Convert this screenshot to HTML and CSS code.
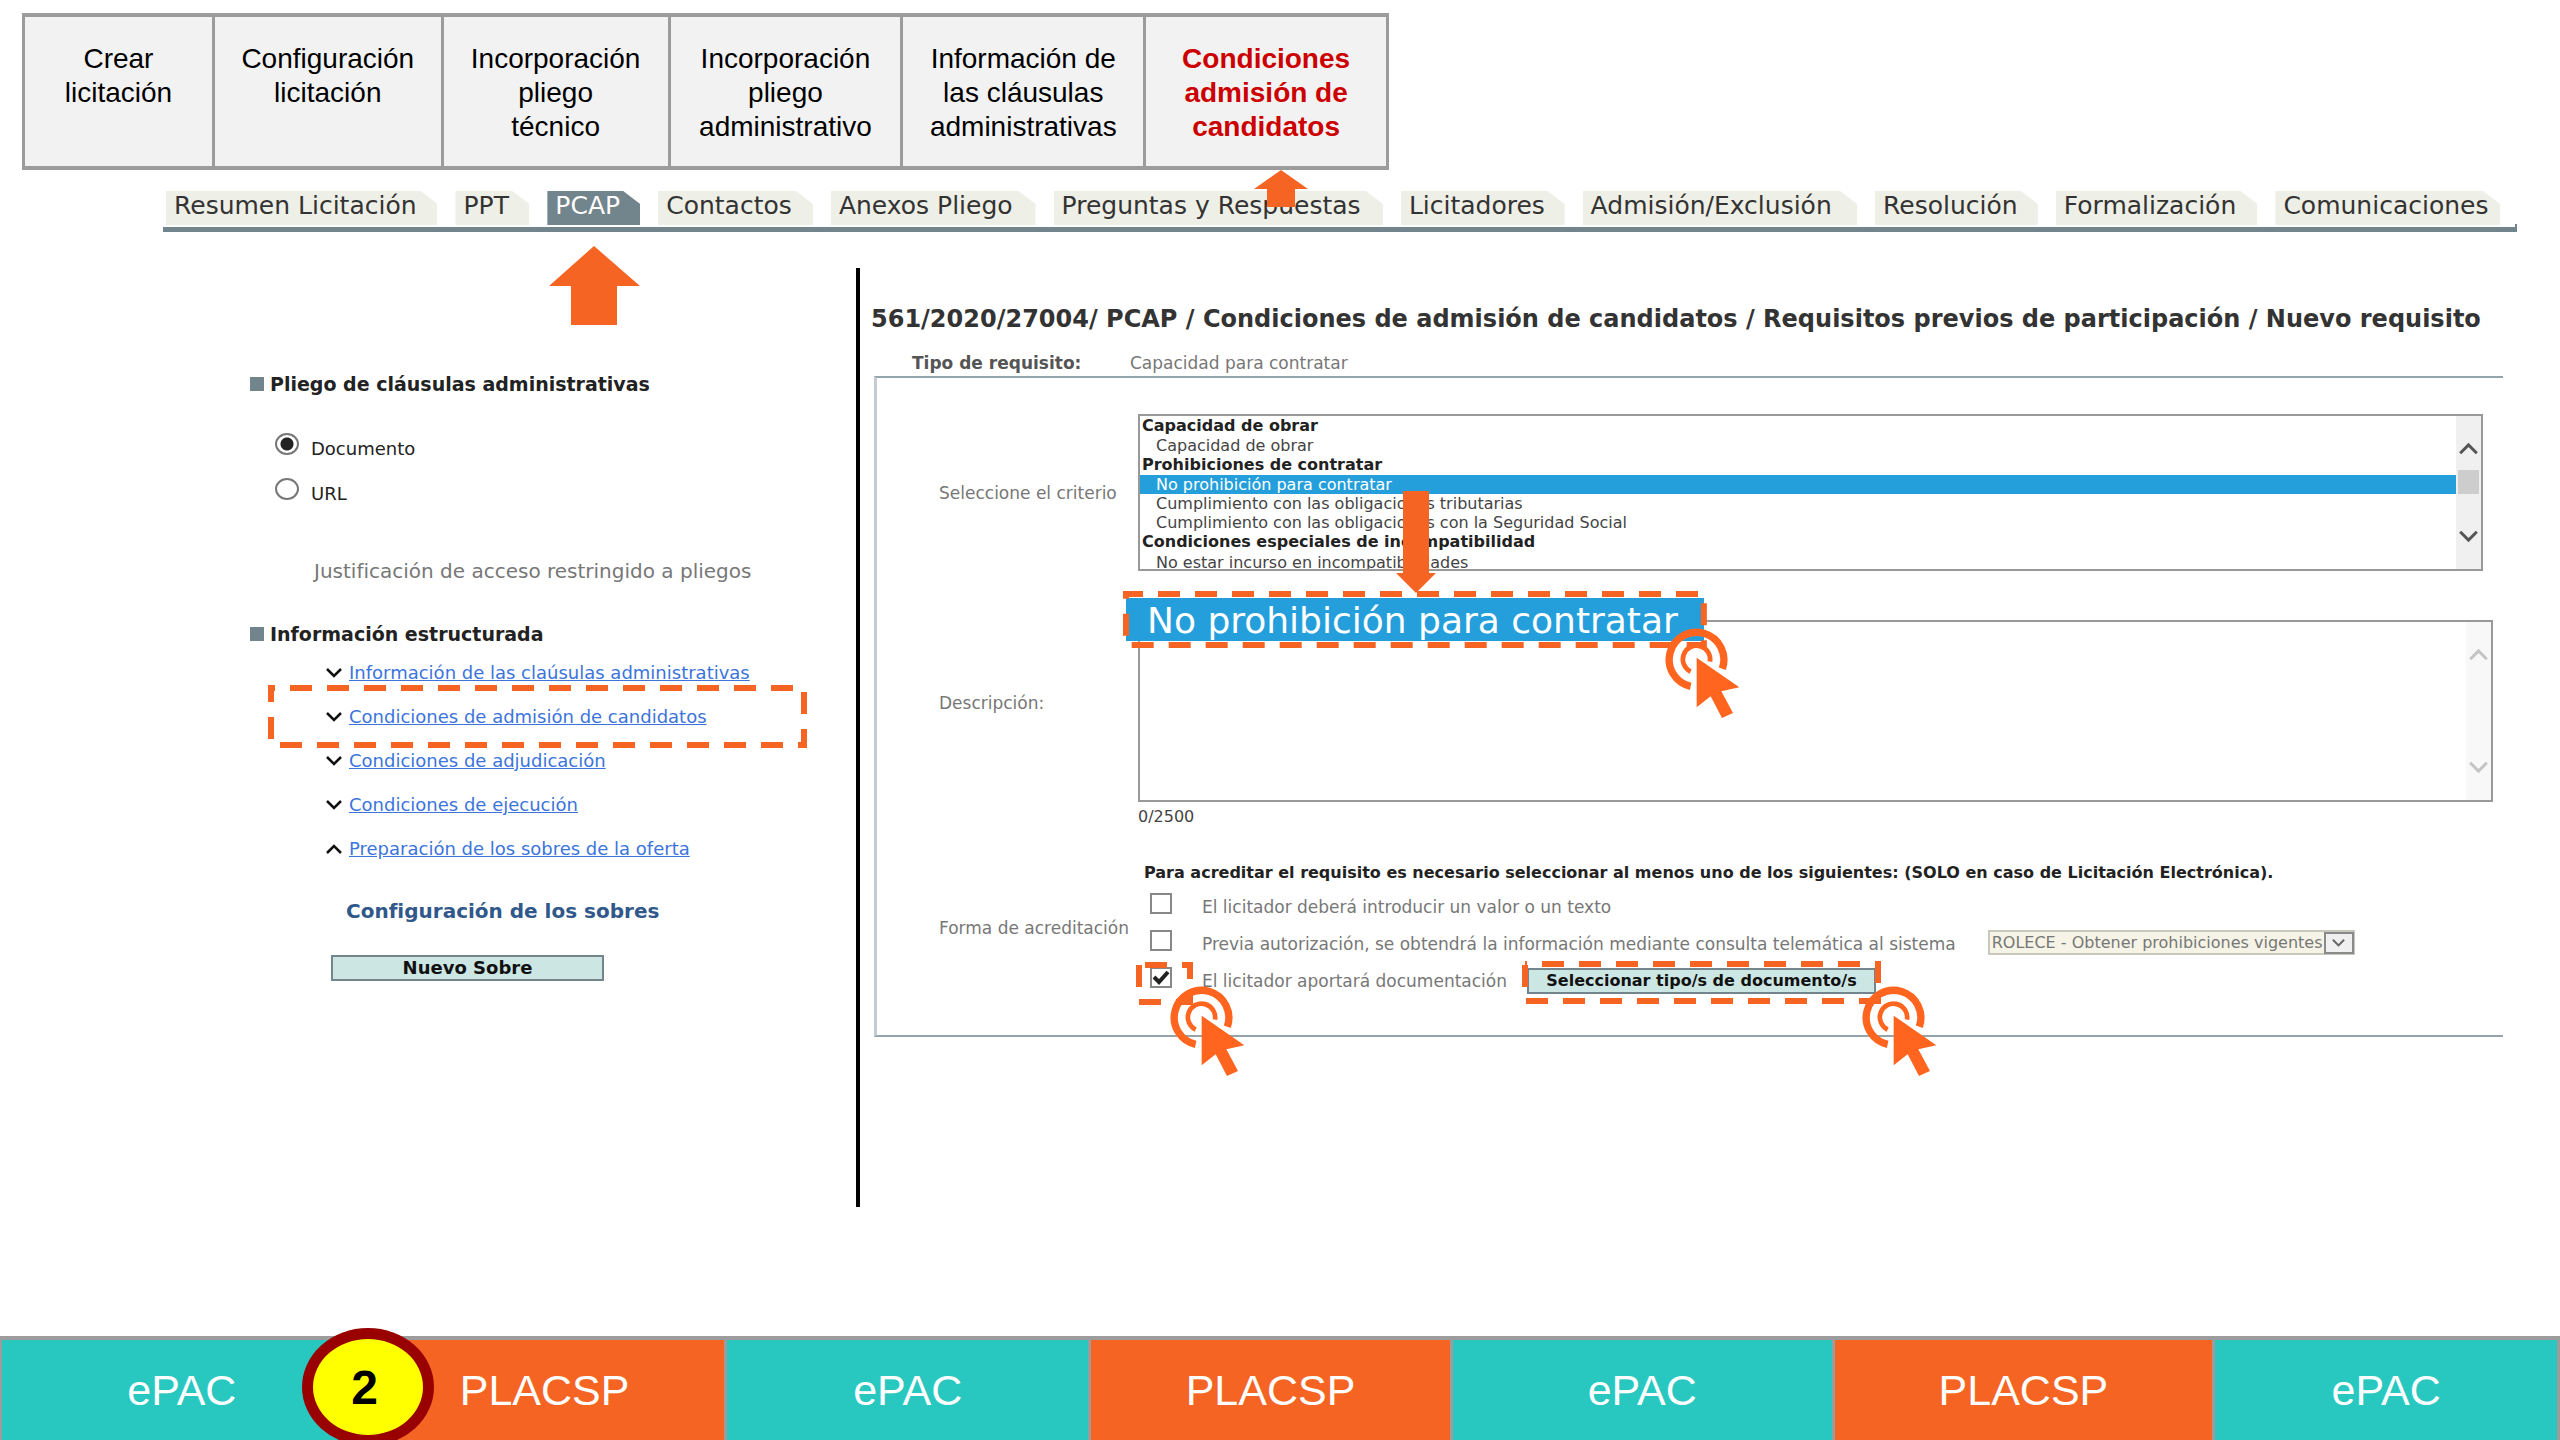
FILE: index.html
```
<!DOCTYPE html>
<html lang="es">
<head>
<meta charset="utf-8">
<meta name="viewport" content="width=device-width, initial-scale=1">
<title>PCAP - Condiciones de admisión de candidatos</title>
<link rel="stylesheet" href="styles.css">
</head>
<body>
<svg class="defs" aria-hidden="true">
  <symbol id="click" viewBox="0 0 228 276">
    <path d="M77 175A82 82 0 1 1 172 122" fill="none" stroke="#ff651f" stroke-width="22"/>
    <path d="M77 131A41 41 0 1 1 135 101" fill="none" stroke="#ff651f" stroke-width="14"/>
    <path d="M95 89V238L137 205L171 270L204 255L169 190L223 178Z" fill="#ff651f" stroke="none"/>
  </symbol>
  <symbol id="down" viewBox="0 0 16 10">
    <path d="M1 1L8 8L15 1" fill="none" stroke="currentColor" stroke-width="2.5"/>
  </symbol>
  <symbol id="up" viewBox="0 0 16 10">
    <path d="M1 9L8 2L15 9" fill="none" stroke="currentColor" stroke-width="2.5"/>
  </symbol>
</svg>

<header>
  <ol class="steps">
    <li>Crear<br>licitación</li>
    <li>Configuración<br>licitación</li>
    <li>Incorporación<br>pliego<br>técnico</li>
    <li>Incorporación<br>pliego<br>administrativo</li>
    <li>Información de<br>las cláusulas<br>administrativas</li>
    <li class="current" aria-current="step">Condiciones<br>admisión de<br>candidatos
      <svg class="arrow arrow-step" viewBox="0 0 54 37" aria-hidden="true"><path d="M27 0L54 19H41V37H13V19H0Z"/></svg>
    </li>
  </ol>
  <nav>
    <ul class="tabs">
      <li><a href="#">Resumen Licitación</a></li>
      <li><a href="#">PPT</a></li>
      <li><a href="#" class="active" aria-current="page">PCAP</a>
        <svg class="arrow arrow-tab" viewBox="0 0 91 79" aria-hidden="true"><path d="M45 0L91 40H68V79H22V40H0Z"/></svg>
      </li>
      <li><a href="#">Contactos</a></li>
      <li><a href="#">Anexos Pliego</a></li>
      <li><a href="#">Preguntas y Respuestas</a></li>
      <li><a href="#">Licitadores</a></li>
      <li><a href="#">Admisión/Exclusión</a></li>
      <li><a href="#">Resolución</a></li>
      <li><a href="#">Formalización</a></li>
      <li><a href="#">Comunicaciones</a></li>
    </ul>
  </nav>
</header>

<main>
  <aside>
    <h2>Pliego de cláusulas administrativas</h2>
    <div class="radios">
      <label><input type="radio" name="origen" checked>Documento</label>
      <label><input type="radio" name="origen">URL</label>
    </div>
    <p class="note">Justificación de acceso restringido a pliegos</p>
    <h2 class="second">Información estructurada</h2>
    <ul class="links">
      <li><svg class="chevron"><use href="#down"/></svg><a href="#">Información de las claúsulas administrativas</a></li>
      <li><svg class="chevron"><use href="#down"/></svg><a href="#">Condiciones de admisión de candidatos</a>
        <svg class="dashes dashes-link" aria-hidden="true"><rect width="100%" height="100%"/></svg></li>
      <li><svg class="chevron"><use href="#down"/></svg><a href="#">Condiciones de adjudicación</a></li>
      <li><svg class="chevron"><use href="#down"/></svg><a href="#">Condiciones de ejecución</a></li>
      <li><svg class="chevron"><use href="#up"/></svg><a href="#">Preparación de los sobres de la oferta</a></li>
    </ul>
    <h3>Configuración de los sobres</h3>
    <button type="button" class="button new-envelope">Nuevo Sobre</button>
  </aside>

  <section class="detail">
    <h1>561/2020/27004/ PCAP / Condiciones de admisión de candidatos / Requisitos previos de participación / Nuevo requisito</h1>
    <dl class="kind"><dt>Tipo de requisito:</dt><dd>Capacidad para contratar</dd></dl>
    <form class="panel">
      <label class="name" for="criterio">Seleccione el criterio</label>
      <div class="list-box">
        <select id="criterio" size="8">
          <optgroup label="Capacidad de obrar">
            <option>Capacidad de obrar</option>
          </optgroup>
          <optgroup label="Prohibiciones de contratar">
            <option selected>No prohibición para contratar</option>
            <option>Cumplimiento con las obligaciones tributarias</option>
            <option>Cumplimiento con las obligaciones con la Seguridad Social</option>
          </optgroup>
          <optgroup label="Condiciones especiales de incompatibilidad">
            <option>No estar incurso en incompatibilidades</option>
          </optgroup>
        </select>
        <div class="scroll" aria-hidden="true">
          <svg><use href="#up"/></svg><span class="thumb"></span><svg><use href="#down"/></svg>
        </div>
        <svg class="arrow arrow-option" viewBox="0 0 40 102" aria-hidden="true"><path d="M7 0H33V82H40L20 102L0 82H7Z"/></svg>
      </div>

      <label class="name name-top" for="descripcion">Descripción:</label>
      <div class="text-box">
        <textarea id="descripcion"></textarea>
        <div class="scroll faint" aria-hidden="true">
          <svg><use href="#up"/></svg><svg><use href="#down"/></svg>
        </div>
        <div class="callout">No prohibición para contratar
          <svg class="dashes dashes-callout" aria-hidden="true"><rect width="100%" height="100%"/></svg>
          <svg class="click click-callout" aria-hidden="true"><use href="#click"/></svg>
        </div>
      </div>
      <p class="counter">0/2500</p>

      <span class="name" id="forma">Forma de acreditación</span>
      <div class="checks" role="group" aria-labelledby="forma">
        <p>Para acreditar el requisito es necesario seleccionar al menos uno de los siguientes: (SOLO en caso de Licitación Electrónica).</p>
        <div class="check"><label><input type="checkbox">El licitador deberá introducir un valor o un texto</label></div>
        <div class="check">
          <label><input type="checkbox">Previa autorización, se obtendrá la información mediante consulta telemática al sistema</label>
          <div class="drop">
            <select aria-label="Sistema"><option>ROLECE - Obtener prohibiciones vigentes</option></select>
            <span class="drop-arrow" aria-hidden="true"><svg><use href="#down"/></svg></span>
          </div>
        </div>
        <div class="check">
          <label><input type="checkbox" checked>El licitador aportará documentación</label>
          <svg class="dashes dashes-check" aria-hidden="true"><rect width="100%" height="100%"/></svg>
          <svg class="click click-check" aria-hidden="true"><use href="#click"/></svg>
          <div class="pick">
            <button type="button" class="button">Seleccionar tipo/s de documento/s</button>
            <svg class="dashes dashes-pick" aria-hidden="true"><rect width="100%" height="100%"/></svg>
            <svg class="click click-pick" aria-hidden="true"><use href="#click"/></svg>
          </div>
        </div>
      </div>
    </form>
  </section>
</main>

<footer>
  <ol class="phases">
    <li>ePAC</li>
    <li>PLACSP</li>
    <li>ePAC</li>
    <li>PLACSP</li>
    <li>ePAC</li>
    <li>PLACSP</li>
    <li>ePAC</li>
  </ol>
  <div class="badge">2</div>
</footer>
</body>
</html>
```
FILE: styles.css
```
:root {
  --orange: #f56423;
  --teal: #28c8c0;
  --slate: #72848c;
  --grey: #9c9c9c;
}

* { box-sizing: border-box; }

body {
  margin: 0;
  min-height: 100vh;
  display: flex;
  flex-direction: column;
  background: #fff;
  color: #222;
  font-family: "DejaVu Sans", sans-serif;
  font-size: 17px;
  line-height: 22px;
}

h1, h2, h3, p, ul, ol, dl, dd { margin: 0; padding: 0; }
ul, ol { list-style: none; }
input, select, textarea, button { font: inherit; margin: 0; }
.defs { display: none; }

/* Process steps */
.steps {
  display: grid;
  grid-template-columns: 190fr 229fr 227fr 233fr 243fr 240fr;
  width: 53.4%;
  margin: 13px 0 0 22px;
  border: 4px solid var(--grey);
  border-width: 4px 3px;
  background: #f2f2f2;
  color: #000;
  font-family: "Liberation Sans", sans-serif;
  font-size: 28px;
  line-height: 34px;
  text-align: center;
}
.steps li {
  position: relative;
  padding: 25px 0 22px;
  border-right: 3px solid var(--grey);
}
.steps li:last-child { border-right: 0; }
.steps .current { color: #cc0000; font-weight: bold; }

.arrow { position: absolute; z-index: 2; fill: var(--orange); }
.arrow-step { left: 108px; top: 153px; width: 54px; height: 37px; }
.arrow-tab { left: 2px; top: 55px; width: 91px; height: 79px; }
.arrow-option { left: 256px; top: 75px; width: 40px; height: 102px; }

/* Tabs */
nav {
  position: relative;
  margin: 21px 43px 0 163px;
  padding: 0 17px 2px 3px;
  border-bottom: 5px solid var(--slate);
}
nav::after {
  content: "";
  position: absolute;
  right: 0;
  bottom: 0;
  width: 2px;
  height: 3px;
  background: var(--slate);
}
.tabs {
  display: grid;
  grid-template-columns: 272fr 74fr 93fr 155fr 205fr 330fr 164fr 275fr 163fr 202fr 225fr;
  gap: 18px;
  font-size: 25px;
  line-height: 30px;
}
.tabs li { position: relative; min-width: 0; }
.tabs a {
  display: block;
  padding: 0 0 4px 8px;
  background: #eeefe6;
  color: #333;
  text-decoration: none;
  white-space: nowrap;
  clip-path: polygon(0 0, calc(100% - 17px) 0, 100% 13px, 100% 100%, 0 100%);
}
.tabs .active { background: var(--slate); color: #fff; }

/* Two columns */
main {
  display: grid;
  grid-template-columns: minmax(0, 856fr) minmax(0, 1704fr);
  margin: 36px 0;
}

aside { padding: 104px 40px 0 250px; line-height: 24px; }
h2 {
  display: flex;
  align-items: center;
  gap: 6px;
  font-size: 19px;
  line-height: 24px;
}
h2::before { content: ""; width: 14px; height: 14px; background: var(--slate); }
h2.second { margin-top: 39px; }

.radios { margin: 37px 0 0 25px; display: grid; gap: 17px; font-size: 18px; }
.radios label { display: flex; gap: 12px; height: 28px; align-items: flex-end; }
.radios input {
  appearance: none;
  align-self: flex-start;
  width: 24px;
  height: 22px;
  border: 2px solid #777;
  border-radius: 50%;
  background: #fff;
}
.radios input:checked { background: radial-gradient(circle, #222 0 6px, #fff 7px); }

.note { margin: 53px 0 0 64px; font-size: 20px; color: #777; }

.links { margin: 15px 0 0 76px; display: grid; gap: 20px; font-size: 18px; }
.links li { position: relative; display: flex; align-items: center; gap: 7px; }
.links a { color: #3c74dc; }
.chevron { width: 16px; height: 10px; color: #111; }

h3 { margin: 38px 0 0 96px; font-size: 20px; line-height: 24px; color: #30588a; }

.button {
  height: 26px;
  padding: 0 15px;
  border: 2px solid var(--slate);
  background: #cce6e4;
  color: #111;
  font-size: 16px;
  font-weight: bold;
  line-height: 20px;
}
.new-envelope { width: 273px; margin: 32px 0 0 81px; font-size: 18px; }

/* Orange marks */
.dashes { position: absolute; overflow: visible; z-index: 1; pointer-events: none; }
.dashes rect { fill: none; stroke: var(--orange); stroke-width: 6px; stroke-dasharray: 22px 15px; }
.dashes-link { left: -55px; top: -17px; width: 533px; height: 57px; }
.dashes-link rect { stroke-dashoffset: 18px; }
.dashes-callout { left: 0; top: -4px; width: 100%; height: 51px; }
.dashes-callout rect { stroke-dashoffset: 5px; }
.dashes-check { left: -5px; top: -2px; width: 51px; height: 37px; }
.dashes-check rect { stroke-dashoffset: 31px; }
.dashes-pick { left: -2px; top: -4px; width: calc(100% + 4px); height: 37px; }
.dashes-pick rect { stroke-dashoffset: 20px; }
.click { position: absolute; z-index: 2; width: 76px; height: 92px; pointer-events: none; }
.click-callout { right: -37px; top: 30px; }
.click-check { left: 26px; top: 19px; }
.click-pick { right: -62px; top: 18px; }

/* Requirement form */
.detail { border-left: 4px solid #000; padding: 36px 57px 170px 0; }
h1 {
  padding-left: 11px;
  font-size: 24px;
  line-height: 30px;
  white-space: nowrap;
  color: #333;
}
.kind {
  display: grid;
  grid-template-columns: 218px 1fr;
  margin: 18px 0 2px 52px;
  color: #777;
}
.kind dt { font-weight: bold; color: #555; }

.panel {
  display: grid;
  grid-template-columns: 199px minmax(0, 1fr);
  align-items: center;
  margin-left: 14px;
  padding: 36px 0 43px 62px;
  border: 2px solid #94a4ab;
  border-left: 3px solid #c3ccd3;
  border-right: 0;
}
.name { color: #777; white-space: nowrap; }
.name-top { align-self: start; padding-top: 121px; }

.list-box { position: relative; margin-right: 20px; height: 157px; border: 2px solid #999; }
.list-box select {
  display: block;
  width: 100%;
  height: 153px;
  padding: 0;
  border: 0;
  outline: 0;
  overflow: hidden;
  background: #fff;
  color: #444;
  font-size: 16px;
  line-height: 19px;
}
.list-box optgroup { padding: 0; font-weight: bold; color: #222; }
.list-box option {
  min-height: 0;
  height: 19px;
  padding: 0 0 0 16px;
  font-weight: normal;
  color: #444;
}
.list-box option::before { content: none; }
.list-box option:checked { background: #259fdc; color: #fff; }

.scroll {
  position: absolute;
  top: 2px;
  right: 2px;
  bottom: 2px;
  width: 25px;
  padding: 26px 3px;
  display: flex;
  flex-direction: column;
  justify-content: space-between;
  background: #f0f0f0;
  color: #555;
}
.list-box .scroll { top: 0; right: 0; bottom: 0; }
.scroll svg { width: 19px; height: 13px; }
.scroll .thumb { height: 24px; margin: -22px -1px 0; background: #cdcdcd; }
.scroll.faint { background: #f8f8f8; color: #c4c4c4; }

.text-box { position: relative; margin: 49px 10px 0 0; }
textarea {
  display: block;
  width: 100%;
  height: 182px;
  border: 2px solid #999;
  resize: none;
  overflow: hidden;
}
.callout {
  position: absolute;
  left: -12px;
  top: -22px;
  padding: 3px 26px 0 21px;
  background: #259fdc;
  color: #fff;
  font-size: 36px;
  line-height: 40px;
  white-space: nowrap;
}
.counter { grid-column: 2; margin-top: 5px; font-size: 16px; line-height: 20px; color: #444; }

.panel > #forma, .checks { margin-top: 36px; }
.checks { padding-left: 6px; display: grid; gap: 12px; color: #777; }
.checks p {
  margin-bottom: -2px;
  font-size: 16px;
  line-height: 20px;
  font-weight: bold;
  color: #222;
  white-space: nowrap;
}
.check { position: relative; display: flex; padding-left: 6px; height: 25px; white-space: nowrap; }
.check label { display: flex; gap: 30px; align-items: flex-end; }
.check input {
  appearance: none;
  align-self: flex-start;
  width: 22px;
  height: 21px;
  border: 2px solid #888;
  background: #fff;
}
.check input:checked {
  background: #fff url("data:image/svg+xml,%3Csvg xmlns='http://www.w3.org/2000/svg' viewBox='0 0 18 17'%3E%3Cpath d='M2 8L7 13L16 3' fill='none' stroke='%23222' stroke-width='4'/%3E%3C/svg%3E") center / 100% 100%;
}

.drop { position: relative; width: 367px; margin-left: 32px; }
.drop select {
  appearance: none;
  display: block;
  width: 100%;
  height: 25px;
  padding: 0 0 0 2px;
  border: 2px solid #c9c8bc;
  border-radius: 0;
  background: #f5f4e6;
  color: #777;
  font-size: 16px;
  line-height: 20px;
}
.drop-arrow {
  position: absolute;
  top: 2px;
  right: 1px;
  width: 30px;
  height: 22px;
  display: grid;
  place-items: center;
  border: 2px solid #8a8a8a;
  background: #f0f0f0;
  color: #666;
  pointer-events: none;
}
.drop-arrow svg { width: 13px; height: 8px; }

.pick { position: relative; margin: 1px 0 0 20px; }
.pick .button { display: block; width: 349px; }

/* Phase bar */
footer { position: relative; margin-top: auto; padding-top: 8px; overflow: hidden; }
.phases {
  display: grid;
  grid-template-columns: 363fr 363fr 364fr 362fr 382fr 381fr 345fr;
  border-top: 4px solid var(--grey);
  border-left: 2px solid var(--grey);
  color: #fff;
  font-family: "Liberation Sans", sans-serif;
  font-size: 43px;
  line-height: 48px;
  text-align: center;
}
.phases li { padding: 26px 0; background: var(--teal); border-right: 3px solid var(--grey); }
.phases li:nth-child(even) { background: var(--orange); }
.badge {
  position: absolute;
  left: 11.8%;
  top: 0;
  width: 132px;
  height: 118px;
  padding-right: 7px;
  border: 11px solid #990000;
  border-radius: 50%;
  background: #ff0;
  color: #000;
  font: bold 48px/98px "Liberation Sans", sans-serif;
  text-align: center;
}
```
